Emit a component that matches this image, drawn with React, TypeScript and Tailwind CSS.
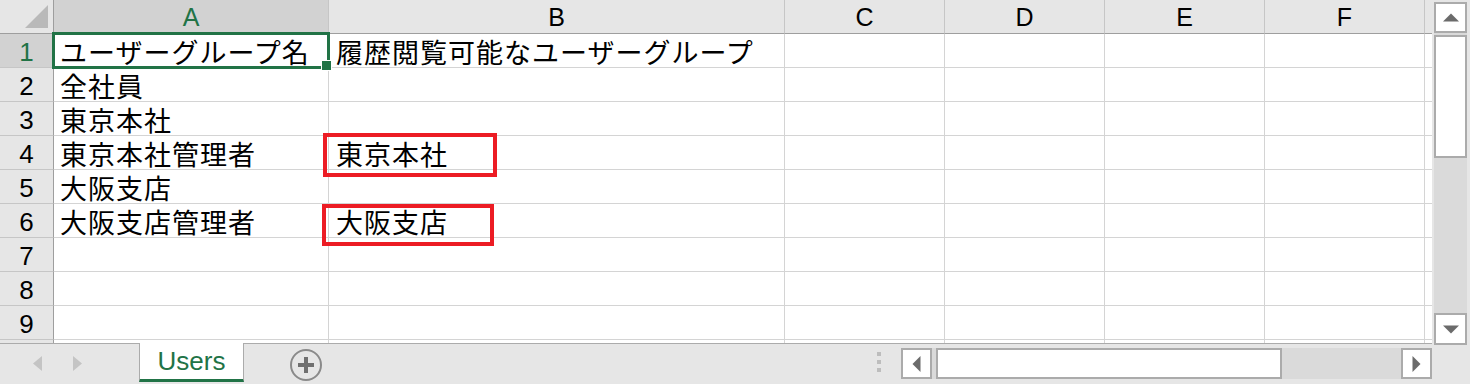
import React from "react";

const rows: [string, string][] = [
  ["ユーザーグループ名", "履歴閲覧可能なユーザーグループ"],
  ["全社員", ""],
  ["東京本社", ""],
  ["東京本社管理者", "東京本社"],
  ["大阪支店", ""],
  ["大阪支店管理者", "大阪支店"],
  ["", ""],
  ["", ""],
  ["", ""],
];

const cjk = "font-['Noto_Sans_CJK_JP',sans-serif] text-[27px] tracking-[1px] text-black leading-[30px] pt-[3px] whitespace-nowrap";
const lat = "font-['Liberation_Sans',Arial,sans-serif]";

function HeaderRow() {
  const hc = `h-full shrink-0 border-r border-b border-[#c6c6c6] border-b-[#9e9e9e] bg-[#e6e6e6] flex justify-center pt-[3px] leading-[29px] text-[25px] text-black ${lat}`;
  return (
    <div className="flex h-[34px]">
      <div className="w-[54px] h-full shrink-0 border-r border-b border-[#9e9e9e] bg-[#e6e6e6] relative">
        <svg width="53" height="33" className="absolute left-0 top-0">
          <polygon points="48,5 48,28 25,28" fill="#b9b9b9" />
        </svg>
      </div>
      <div className={`w-[275px] h-full shrink-0 border-r border-[#c6c6c6] border-b-2 border-b-[#217346] bg-[#d2d2d2] flex justify-center pt-[3px] leading-[29px] text-[25px] text-[#217346] ${lat}`}>A</div>
      <div className={`w-[456px] ${hc}`}>B</div>
      <div className={`w-[160px] ${hc}`}>C</div>
      <div className={`w-[160px] ${hc}`}>D</div>
      <div className={`w-[160px] ${hc}`}>E</div>
      <div className={`w-[160px] ${hc}`}>F</div>
      <div className="w-[8px] h-full shrink-0 border-b border-[#9e9e9e] bg-[#e6e6e6]" />
    </div>
  );
}

function DataRow({ n, a, b }: { n: number; a: string; b: string }) {
  const sel = n === 1;
  const gc = "h-full shrink-0 border-r border-b border-[#d4d4d4] bg-white";
  return (
    <div className="flex h-[34px]">
      <div
        className={`w-[54px] h-full shrink-0 border-r border-r-[#9e9e9e] border-b border-b-[#c6c6c6] flex justify-center pt-[3px] leading-[30px] text-[26px] ${lat} ${
          sel ? "bg-[#d2d2d2] text-[#217346]" : "bg-[#e6e6e6] text-black"
        }`}
      >
        {n}
      </div>
      <div className={`w-[275px] relative pl-[6px] ${gc}`}>
        <div className={cjk}>{a}</div>
        {sel && (
          <>
            <div className="absolute -left-[2px] -top-[2px] -right-[2px] -bottom-[2px] border-[3px] border-[#217346] z-10" />
            <div className="absolute -right-[4px] -bottom-[4px] w-[11px] h-[11px] bg-[#217346] border border-white z-20" />
          </>
        )}
      </div>
      <div className={`w-[456px] relative pl-[7px] ${gc}`}>
        <div className={cjk}>{b}</div>
        {n === 4 && (
          <div className="absolute -left-[6px] -top-[3px] w-[174px] h-[44px] border-4 border-[#ec1c24] z-10" />
        )}
        {n === 6 && (
          <div className="absolute -left-[7px] top-0 w-[172px] h-[42px] border-4 border-[#ec1c24] z-10" />
        )}
      </div>
      <div className={`w-[160px] ${gc}`} />
      <div className={`w-[160px] ${gc}`} />
      <div className={`w-[160px] ${gc}`} />
      <div className={`w-[160px] ${gc}`} />
      <div className="w-[8px] h-full shrink-0 border-r border-r-[#a6a6a6] border-b border-b-[#d4d4d4] bg-white" />
    </div>
  );
}

function PartialRow() {
  const gc = "h-full shrink-0 border-r border-[#d4d4d4] bg-white";
  return (
    <div className="flex h-[3px]">
      <div className="w-[54px] h-full shrink-0 border-r border-[#9e9e9e] bg-[#e6e6e6]" />
      <div className={`w-[275px] ${gc}`} />
      <div className={`w-[456px] ${gc}`} />
      <div className={`w-[160px] ${gc}`} />
      <div className={`w-[160px] ${gc}`} />
      <div className={`w-[160px] ${gc}`} />
      <div className={`w-[160px] ${gc}`} />
      <div className="w-[8px] h-full shrink-0 border-r border-[#a6a6a6] bg-white" />
    </div>
  );
}

function VScroll() {
  return (
    <div className="w-[38px] h-full shrink-0 flex flex-col pl-[2px] pr-[3px] pt-[2px] bg-[#e6e6e6]">
      <div className="h-[31px] border-2 border-[#ababab] bg-white flex items-center justify-center">
        <svg width="16" height="9">
          <polygon points="0,8.5 8,0.5 16,8.5" fill="#6b6b6b" />
        </svg>
      </div>
      <div className="h-[2px] bg-[#dadada]" />
      <div className="h-[123px] border-2 border-[#ababab] bg-white" />
      <div className="h-[155px] bg-[#dadada]" />
      <div className="h-[32px] border-2 border-[#ababab] bg-white flex items-center justify-center">
        <svg width="16" height="9">
          <polygon points="0,0.5 16,0.5 8,8.5" fill="#6b6b6b" />
        </svg>
      </div>
    </div>
  );
}

function BottomBar() {
  return (
    <div className="h-[41px] shrink-0 flex items-start border-t border-[#ababab] bg-[#e6e6e6]">
      <svg width="9" height="15" className="ml-[33px] mt-[12px]">
        <polygon points="9,0 0,7.5 9,15" fill="#c4c4c4" />
      </svg>
      <svg width="9" height="15" className="ml-[31px] mt-[12px]">
        <polygon points="0,0 9,7.5 0,15" fill="#c4c4c4" />
      </svg>
      <div
        className={`ml-[57px] -mt-[1px] w-[105px] h-[39px] border-l border-r border-[#ababab] border-b-[3px] border-b-[#217346] bg-white flex items-center justify-center text-[26px] leading-[30px] text-[#217346] ${lat}`}
      >
        Users
      </div>
      <svg width="34" height="34" className="ml-[45px] mt-[4px]">
        <circle cx="17" cy="17" r="15" fill="none" stroke="#8a8a8a" strokeWidth="2" />
        <rect x="9" y="15" width="16" height="4" fill="#6f6f6f" />
        <rect x="15" y="9" width="4" height="16" fill="#6f6f6f" />
      </svg>
      <div className="ml-[554px] mt-[8px] flex flex-col gap-[4px]">
        <div className="w-[4px] h-[4px] bg-[#bdbdbd]" />
        <div className="w-[4px] h-[4px] bg-[#bdbdbd]" />
        <div className="w-[4px] h-[4px] bg-[#bdbdbd]" />
      </div>
      <div className="ml-[20px] mt-[4px] w-[531px] h-[31px] flex bg-[#dadada]">
        <div className="w-[31px] h-full border-2 border-[#ababab] bg-white flex items-center justify-center">
          <svg width="9" height="16">
            <polygon points="8.5,0 0.5,8 8.5,16" fill="#6b6b6b" />
          </svg>
        </div>
        <div className="w-[346px] h-full ml-[4px] border-2 border-[#ababab] bg-white" />
        <div className="flex-1" />
        <div className="w-[31px] h-full border-2 border-[#ababab] bg-white flex items-center justify-center">
          <svg width="9" height="16">
            <polygon points="0.5,0 8.5,8 0.5,16" fill="#6b6b6b" />
          </svg>
        </div>
      </div>
    </div>
  );
}

export default function App() {
  return (
    <div className="w-[1470px] h-[384px] flex bg-[#e6e6e6] overflow-hidden">
      <div className="w-[1432px] h-full shrink-0 flex flex-col">
        <div className="h-[343px] shrink-0 bg-white">
          <HeaderRow />
          {rows.map((r, i) => (
            <DataRow key={i} n={i + 1} a={r[0]} b={r[1]} />
          ))}
          <PartialRow />
        </div>
        <BottomBar />
      </div>
      <VScroll />
    </div>
  );
}
